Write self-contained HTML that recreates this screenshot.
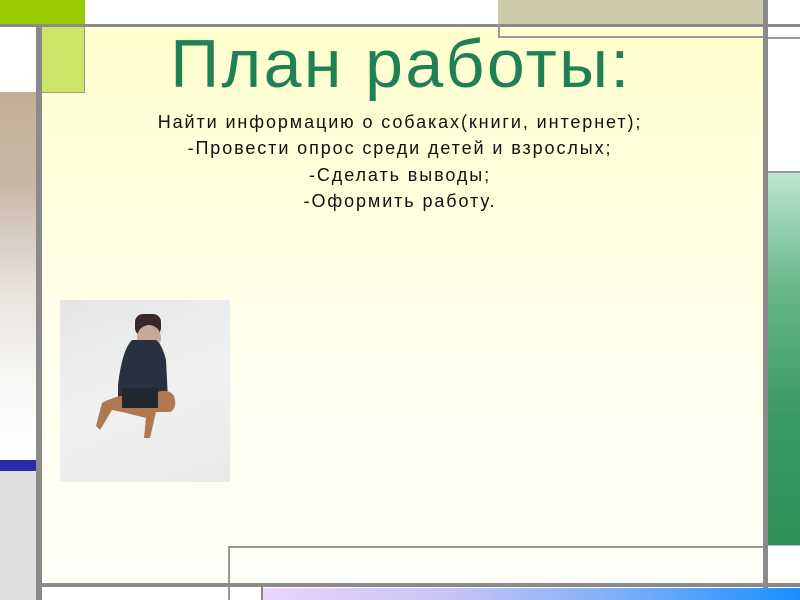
<!DOCTYPE html>
<html><head><meta charset="utf-8"><style>
body{margin:0;width:800px;height:600px;position:relative;overflow:hidden;background:#fff;font-family:"Liberation Sans",sans-serif}
div{position:absolute;box-sizing:border-box}
</style></head><body>
<div style="left:42px;top:28px;width:721px;height:556px;background:linear-gradient(#ffffcc,#ffffea 50%,#fffffa)"></div>
<div style="left:0;top:0;width:85px;height:24px;background:#99cc00"></div>
<div style="left:498px;top:0;width:265px;height:24px;background:#cccaaa"></div>
<div style="left:0;top:24px;width:800px;height:3px;background:#8a8a8a"></div>
<div style="left:498px;top:24px;width:266px;height:14px;border-left:2px solid #999;border-bottom:2px solid #999"></div>
<div style="left:767px;top:37px;width:33px;height:2px;background:#999"></div>
<div style="left:42px;top:27px;width:43px;height:66px;background:#cce566;border-right:1px solid #999;border-bottom:1px solid #999"></div>
<div style="left:0;top:92px;width:36px;height:368px;background:linear-gradient(#c4ae96,#c9b8a6 25%,#e8e4de 55%,#faf9f7 80%,#fff)"></div>
<div style="left:0;top:460px;width:36px;height:11px;background:#2b2ba8"></div>
<div style="left:0;top:471px;width:36px;height:129px;background:#dedede"></div>
<div style="left:36px;top:24px;width:6px;height:576px;background:#8a8a8a"></div>
<div style="left:763px;top:0;width:5px;height:600px;background:#8a8a8a"></div>
<div style="left:768px;top:171px;width:32px;height:2px;background:#999"></div>
<div style="left:768px;top:173px;width:32px;height:372px;background:linear-gradient(#bde6cf,#6ab88a 30%,#3a9a66 65%,#2e9258)"></div>
<div style="left:768px;top:545px;width:32px;height:1px;background:#bbb"></div>
<div style="left:228px;top:546px;width:535px;height:40px;border-left:2px solid #999;border-top:2px solid #999"></div>
<div style="left:40px;top:583px;width:760px;height:4px;background:#8a8a8a"></div>
<div style="left:228px;top:587px;width:2px;height:13px;background:#999"></div>
<div style="left:261px;top:587px;width:2px;height:13px;background:#888"></div>
<div style="left:263px;top:588px;width:537px;height:12px;background:linear-gradient(90deg,#ead4fa,#c8c4f6 35%,#80b0f8 65%,#1a90ff)"></div>
<div style="left:0;top:29px;width:800px;text-align:center;color:#1f7f55;font-size:68px;line-height:70px;letter-spacing:2.4px;text-indent:2px">План работы:</div>
<div style="left:0;top:109px;width:800px;text-align:center;color:#111;font-size:18px;line-height:26.3px;letter-spacing:1.9px">Найти информацию о собаках(книги, интернет);<br>-Провести опрос среди детей и взрослых;<br>-Сделать выводы;<br>-Оформить работу.</div>
<div style="left:60px;top:300px;width:170px;height:182px;background:linear-gradient(160deg,#e4e6e6,#f0f1f1 50%,#e8eaea)"></div>
<svg style="position:absolute;left:60px;top:300px" width="170" height="182">
<rect x="75" y="14" width="26" height="22" rx="8" fill="#3a2828"/>
<ellipse cx="89" cy="38" rx="12" ry="13" fill="#c8a898"/>
<path d="M72 40 Q62 50 58 85 L58 100 L108 100 L106 60 Q102 44 96 40 Z" fill="#2a3040"/>
<path d="M42 103 Q60 92 90 95 Q108 86 114 96 Q118 108 110 112 L96 112 L90 138 L84 138 L86 118 L62 112 L52 110 L40 130 L36 126 Z" fill="#b07850"/>
<rect x="62" y="88" width="36" height="20" fill="#222830"/>
</svg>
</body></html>
